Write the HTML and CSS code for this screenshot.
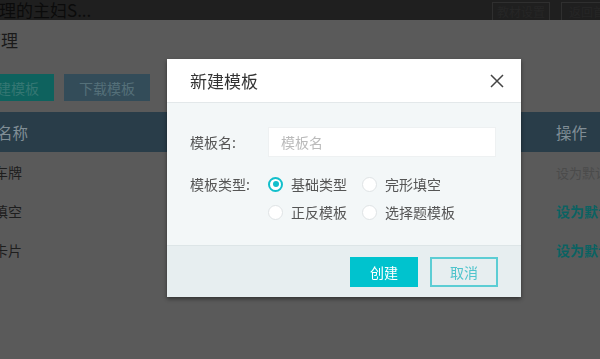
FILE: index.html
```html
<!DOCTYPE html>
<html lang="zh-CN">
<head>
    <meta charset="UTF-8">
    <meta name="viewport" content="width=device-width, initial-scale=1.0">
    <title>模板管理</title>
    <link rel="stylesheet" href="styles.css">
</head>
<body>
    <div class="page">
        <div class="topbar">
            <span class="site-title">管理的主妇S...</span>
            <div class="top-actions">
                <span class="top-btn">教材设置</span>
                <span class="top-btn wide">返回首页</span>
            </div>
        </div>
        <div class="subhead">模板管理</div>
        <div class="toolbar">
            <button class="btn-new">新建模板</button>
            <button class="btn-down">下载模板</button>
        </div>
        <div class="table">
            <div class="row head">
                <div class="cell">模板名称</div>
                <div class="cell">操作</div>
            </div>
            <div class="row">
                <div class="cell">汽车车牌</div>
                <div class="cell"><span class="set-off">设为默认</span></div>
            </div>
            <div class="row">
                <div class="cell">单词填空</div>
                <div class="cell"><a class="set-on" href="#">设为默认</a></div>
            </div>
            <div class="row">
                <div class="cell">单词卡片</div>
                <div class="cell"><a class="set-on" href="#">设为默认</a></div>
            </div>
        </div>
    </div>

    <div class="modal">
        <div class="modal-header">
            <h2>新建模板</h2>
            <span class="close">
                <svg width="14" height="14" viewBox="0 0 14 14">
                    <path d="M1 1 L13 13 M13 1 L1 13" stroke="#444" stroke-width="1.5" fill="none"/>
                </svg>
            </span>
        </div>
        <div class="modal-body">
            <div class="form-row">
                <label>模板名:</label>
                <input type="text" placeholder="模板名">
            </div>
            <div class="form-row types">
                <label>模板类型:</label>
                <div class="radios">
                    <span class="radio checked"><i></i>基础类型</span>
                    <span class="radio"><i></i>完形填空</span>
                    <span class="radio"><i></i>正反模板</span>
                    <span class="radio"><i></i>选择题模板</span>
                </div>
            </div>
        </div>
        <div class="modal-footer">
            <button class="btn-ok">创建</button>
            <button class="btn-cancel">取消</button>
        </div>
    </div>
</body>
</html>
```

FILE: styles.css
```css
body {
    margin: 0;
    background-color: #5a5a5a;
    font-family: "Noto Sans CJK SC", "Noto Sans", sans-serif;
    color: #1e1e1e;
    overflow: hidden;
    height: 359px;
}

.page {
    margin-left: -50px;
    width: 690px;
}

.topbar {
    height: 20px;
    background: #1f1f1f;
    display: flex;
    justify-content: space-between;
    align-items: center;
}

.site-title {
    font-size: 17px;
    color: #0b0b0b;
    margin-left: 32px;
    line-height: 20px;
}

.top-actions {
    display: flex;
    gap: 11px;
    margin-right: 15px;
    align-self: flex-end;
}

.top-btn {
    border: 1px solid #2f2f2f;
    border-bottom: none;
    width: 56px;
    height: 17px;
    font-size: 12px;
    line-height: 17px;
    text-align: center;
    color: #262626;
}

.top-btn.wide {
    width: 62px;
}

.subhead {
    height: 40px;
    line-height: 40px;
    font-size: 17px;
    color: #1a1a1a;
}

.toolbar {
    display: flex;
    gap: 10px;
    padding: 14px 0 11px 18px;
}

.toolbar button {
    width: 86px;
    height: 27px;
    border: none;
    font-family: inherit;
    font-size: 14px;
    padding: 0;
}

.btn-new {
    background: #0e625e;
    color: #357773;
}

.btn-down {
    background: #334c59;
    color: #557079;
}

.row {
    display: grid;
    grid-template-columns: 1fr 84px;
    height: 39px;
    align-items: center;
    font-size: 14px;
}

.row .cell:first-child {
    padding-left: 16px;
}

.row.head {
    height: 40px;
    background: #293d49;
    color: #808e96;
    font-size: 15.5px;
}

.set-off {
    color: #4b4b4b;
    font-size: 13px;
}

.set-on {
    color: #0b6262;
    text-decoration: none;
    font-weight: bold;
    font-size: 14px;
}

/* dialog */
.modal {
    position: fixed;
    left: 167px;
    top: 59px;
    width: 354px;
    background: #f3f7f8;
    box-shadow: 0 2px 4px rgba(0, 0, 0, 0.45);
}

.modal-header {
    height: 43px;
    background: #fff;
    border-bottom: 1px solid #e3e8ea;
    display: flex;
    align-items: center;
    justify-content: space-between;
    padding: 0 17px 0 23px;
}

.modal-header h2 {
    margin: 0;
    font-size: 17px;
    font-weight: normal;
    color: #333;
}

.close {
    display: flex;
}

.modal-body {
    padding: 24px 25px 19px 23px;
}

.form-row {
    display: flex;
    align-items: center;
}

.form-row label {
    width: 78px;
    font-size: 14px;
    color: #555;
}

.form-row input {
    width: 228px;
    height: 30px;
    box-sizing: border-box;
    border: 1px solid #eef1f2;
    background: #fff;
    padding: 0 12px;
    font-family: inherit;
    font-size: 14px;
    outline: none;
}

.form-row input::placeholder {
    color: #bbb;
}

.form-row.types {
    margin-top: 13px;
    align-items: flex-start;
}

.form-row.types label {
    line-height: 28px;
}

.radios {
    display: grid;
    grid-template-columns: 94px 100px;
}

.radio {
    display: flex;
    align-items: center;
    gap: 8px;
    height: 28px;
    font-size: 14px;
    color: #555;
}

.radio i {
    width: 15px;
    height: 15px;
    border-radius: 50%;
    border: 1px solid #dfe3e5;
    background: #fff;
    box-sizing: border-box;
    position: relative;
}

.radio.checked i {
    border: 2px solid #12bfcb;
}

.radio.checked i::after {
    content: "";
    position: absolute;
    left: 2.5px;
    top: 2.5px;
    width: 6px;
    height: 6px;
    border-radius: 50%;
    background: #12bfcb;
}

.modal-footer {
    background: #e7eef0;
    border-top: 1px solid #dde5e7;
    display: flex;
    justify-content: flex-end;
    gap: 12px;
    padding: 11px 23px 10px;
}

.modal-footer button {
    width: 68px;
    height: 30px;
    font-family: inherit;
    font-size: 14px;
    padding: 0;
    cursor: pointer;
}

.btn-ok {
    background: #00c3ce;
    border: none;
    color: #fff;
}

.btn-cancel {
    background: transparent;
    border: 2px solid #5ccdd4;
    color: #4fc4cc;
}
```
